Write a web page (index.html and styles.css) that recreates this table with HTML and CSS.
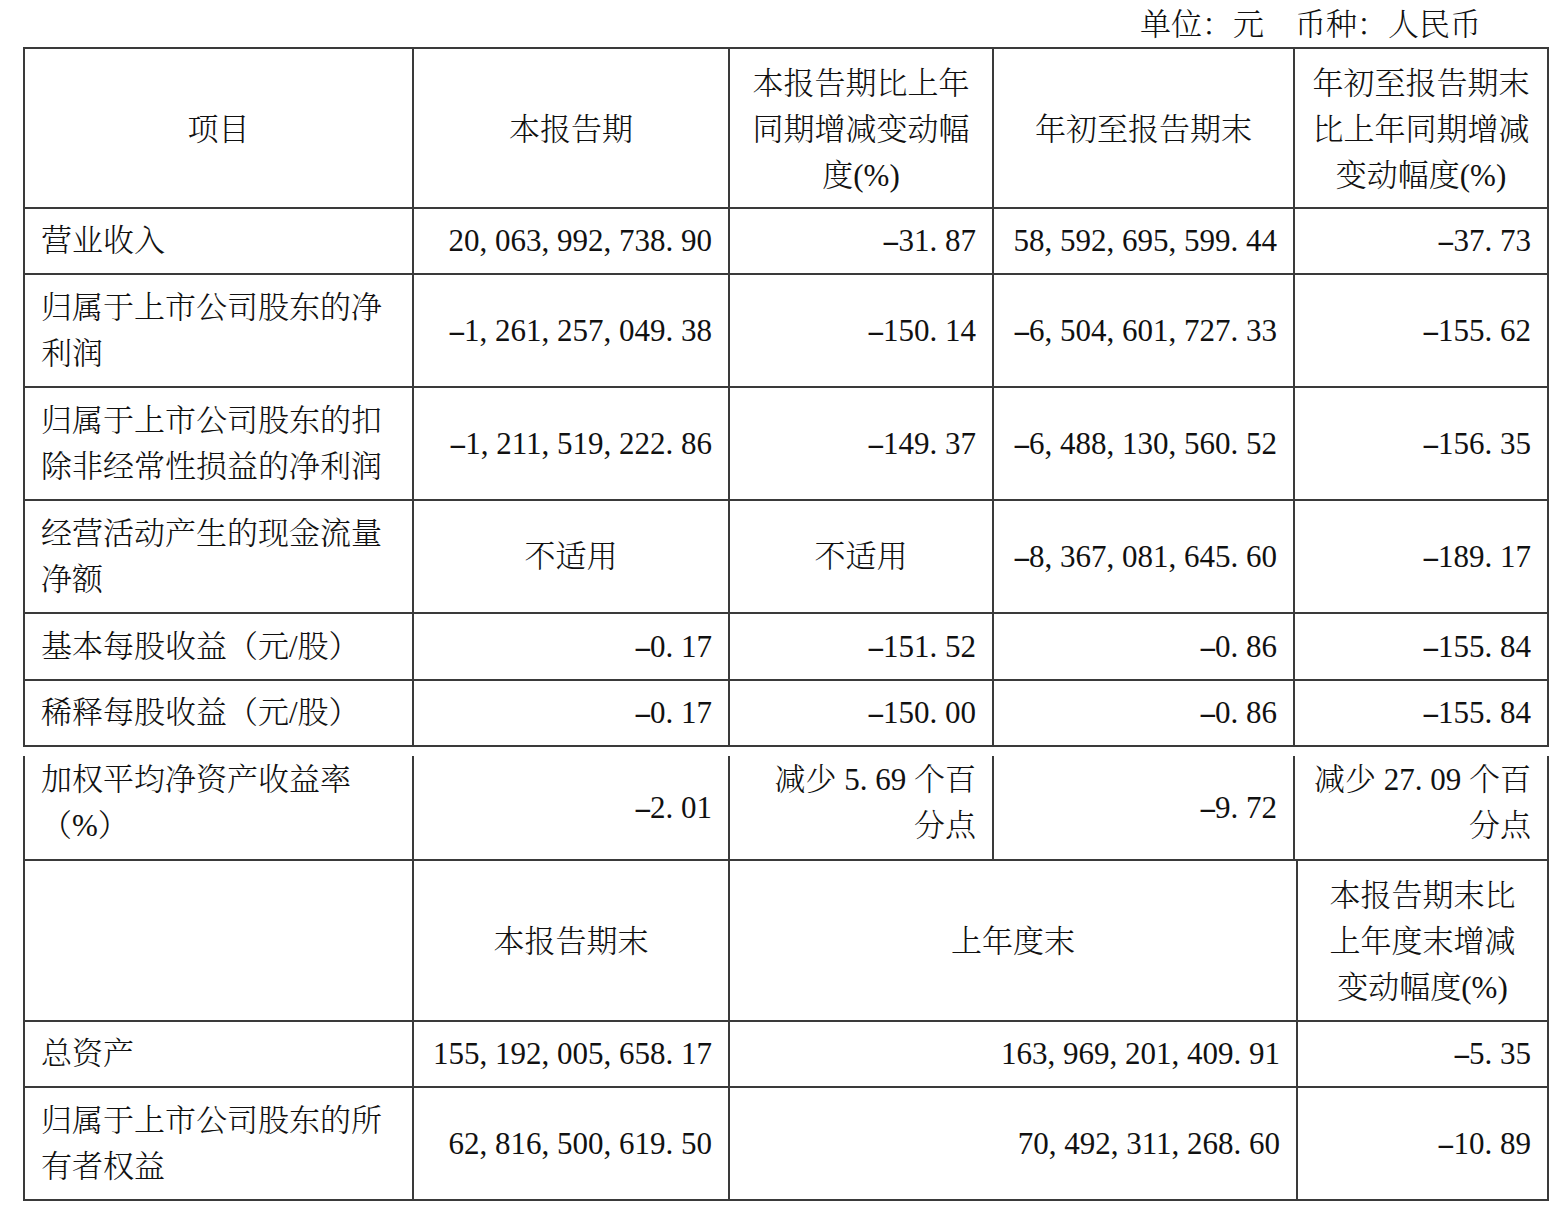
FILE: index.html
```html
<!DOCTYPE html>
<html lang="zh-CN">
<head>
<meta charset="utf-8">
<title>主要会计数据和财务指标</title>
<link rel="stylesheet" href="styles.css">
</head>
<body>
<div class="sheet">
  <div class="unit">单位：元　币种：人民币</div>

  <table class="grid grid-top">
    <colgroup>
      <col class="c1"><col class="c2"><col class="c3"><col class="c4"><col class="c5">
    </colgroup>
    <tr class="h3">
      <th>项目</th>
      <th>本报告期</th>
      <th>本报告期比上年<br>同期增减变动幅<br>度(%)</th>
      <th>年初至报告期末</th>
      <th>年初至报告期末<br>比上年同期增减<br>变动幅度(%)</th>
    </tr>
    <tr class="h1">
      <td class="lab">营业收入</td>
      <td class="num"><span class="n">20<i>,</i>063<i>,</i>992<i>,</i>738<i>.</i>90</span></td>
      <td class="num"><span class="n"><i class="m">-</i>31<i>.</i>87</span></td>
      <td class="num"><span class="n">58<i>,</i>592<i>,</i>695<i>,</i>599<i>.</i>44</span></td>
      <td class="num"><span class="n"><i class="m">-</i>37<i>.</i>73</span></td>
    </tr>
    <tr class="h2">
      <td class="lab">归属于上市公司股东的净利润</td>
      <td class="num"><span class="n"><i class="m">-</i>1<i>,</i>261<i>,</i>257<i>,</i>049<i>.</i>38</span></td>
      <td class="num"><span class="n"><i class="m">-</i>150<i>.</i>14</span></td>
      <td class="num"><span class="n"><i class="m">-</i>6<i>,</i>504<i>,</i>601<i>,</i>727<i>.</i>33</span></td>
      <td class="num"><span class="n"><i class="m">-</i>155<i>.</i>62</span></td>
    </tr>
    <tr class="h2">
      <td class="lab">归属于上市公司股东的扣除非经常性损益的净利润</td>
      <td class="num"><span class="n"><i class="m">-</i>1<i>,</i>211<i>,</i>519<i>,</i>222<i>.</i>86</span></td>
      <td class="num"><span class="n"><i class="m">-</i>149<i>.</i>37</span></td>
      <td class="num"><span class="n"><i class="m">-</i>6<i>,</i>488<i>,</i>130<i>,</i>560<i>.</i>52</span></td>
      <td class="num"><span class="n"><i class="m">-</i>156<i>.</i>35</span></td>
    </tr>
    <tr class="h2">
      <td class="lab">经营活动产生的现金流量净额</td>
      <td class="mid">不适用</td>
      <td class="mid">不适用</td>
      <td class="num"><span class="n"><i class="m">-</i>8<i>,</i>367<i>,</i>081<i>,</i>645<i>.</i>60</span></td>
      <td class="num"><span class="n"><i class="m">-</i>189<i>.</i>17</span></td>
    </tr>
    <tr class="h1b">
      <td class="lab">基本每股收益（元/股）</td>
      <td class="num"><span class="n"><i class="m">-</i>0<i>.</i>17</span></td>
      <td class="num"><span class="n"><i class="m">-</i>151<i>.</i>52</span></td>
      <td class="num"><span class="n"><i class="m">-</i>0<i>.</i>86</span></td>
      <td class="num"><span class="n"><i class="m">-</i>155<i>.</i>84</span></td>
    </tr>
    <tr class="h1">
      <td class="lab">稀释每股收益（元/股）</td>
      <td class="num"><span class="n"><i class="m">-</i>0<i>.</i>17</span></td>
      <td class="num"><span class="n"><i class="m">-</i>150<i>.</i>00</span></td>
      <td class="num"><span class="n"><i class="m">-</i>0<i>.</i>86</span></td>
      <td class="num"><span class="n"><i class="m">-</i>155<i>.</i>84</span></td>
    </tr>
  </table>

  <table class="grid grid-cont">
    <colgroup>
      <col class="c1"><col class="c2"><col class="c3"><col class="c4"><col class="c5">
    </colgroup>
    <tr class="hc">
      <td class="lab top">加权平均净资产收益率（%）</td>
      <td class="num"><span class="n"><i class="m">-</i>2<i>.</i>01</span></td>
      <td class="num top">减少 <span class="n">5<i>.</i>69</span> 个百<br>分点</td>
      <td class="num"><span class="n"><i class="m">-</i>9<i>.</i>72</span></td>
      <td class="num top">减少 <span class="n">27<i>.</i>09</span> 个百<br>分点</td>
    </tr>
  </table>

  <table class="grid grid-bottom">
    <colgroup>
      <col class="c1"><col class="c2"><col class="d3"><col class="d4">
    </colgroup>
    <tr class="h3 first">
      <th></th>
      <th>本报告期末</th>
      <th>上年度末</th>
      <th>本报告期末比<br>上年度末增减<br>变动幅度(%)</th>
    </tr>
    <tr class="h1">
      <td class="lab">总资产</td>
      <td class="num"><span class="n">155<i>,</i>192<i>,</i>005<i>,</i>658<i>.</i>17</span></td>
      <td class="num"><span class="n">163<i>,</i>969<i>,</i>201<i>,</i>409<i>.</i>91</span></td>
      <td class="num"><span class="n"><i class="m">-</i>5<i>.</i>35</span></td>
    </tr>
    <tr class="h2">
      <td class="lab">归属于上市公司股东的所有者权益</td>
      <td class="num"><span class="n">62<i>,</i>816<i>,</i>500<i>,</i>619<i>.</i>50</span></td>
      <td class="num"><span class="n">70<i>,</i>492<i>,</i>311<i>,</i>268<i>.</i>60</span></td>
      <td class="num"><span class="n"><i class="m">-</i>10<i>.</i>89</span></td>
    </tr>
  </table>
</div>
</body>
</html>
```

FILE: styles.css
```css
html, body {
  margin: 0;
  padding: 0;
  background: #ffffff;
}

body {
  font-family: "Liberation Serif", "Noto Serif CJK SC", "Noto Sans CJK SC", serif;
  font-size: 31px;
  font-weight: 300;
  color: #111111;
}

.sheet {
  margin-left: 23px;
  width: 1526px;
}

.unit {
  height: 47px;
  line-height: 50px;
  text-align: right;
  padding-right: 68px;
  box-sizing: border-box;
}

.grid {
  width: 100%;
  table-layout: fixed;
  border-collapse: collapse;
}

.grid th,
.grid td {
  border: 2px solid #3a3a3a;
  padding: 0 16px;
  line-height: 46px;
  vertical-align: middle;
  font-weight: 300;
}

.grid th {
  text-align: center;
  padding-top: 3px;
}

.c1 { width: 389px; }
.c2 { width: 316px; }
.c3 { width: 264px; }
.c4 { width: 301px; }
.c5 { width: 254px; }
.d3 { width: 568px; }
.d4 { width: 251px; }

.h3 { height: 160px; }
.h2 { height: 113px; }
.h1 { height: 66px; }
.h1b { height: 67px; }
.hc { height: 104px; }

.lab { text-align: left; }
.num { text-align: right; }
.mid { text-align: center; }

.grid-cont {
  margin-top: 9px;
}

.grid-cont td {
  border-top: none;
}

.grid-cont td.top {
  vertical-align: top;
  padding-top: 1px;
}

.grid-bottom .first th {
  border-top: none;
}

.n i {
  font-style: normal;
  display: inline-block;
  width: 0.5em;
  text-align: left;
}

.n i.m {
  text-align: center;
  transform: scaleX(1.8);
}
```
